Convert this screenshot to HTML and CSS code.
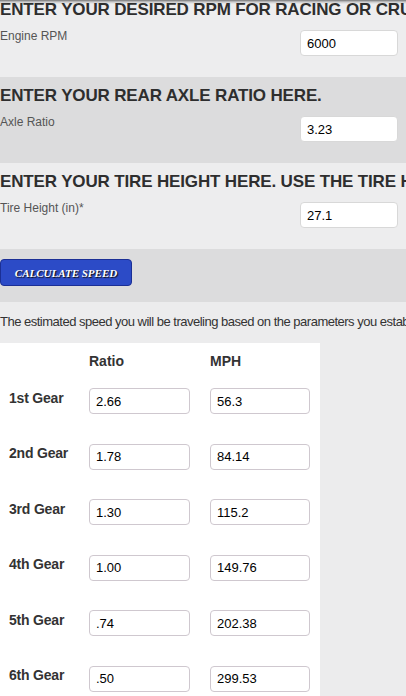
FILE: index.html
```html
<!DOCTYPE html>
<html lang="en">
<head>
<meta charset="utf-8">
<title>Speed Calculator</title>
<link rel="stylesheet" href="styles.css">
</head>
<body>
<div class="page">
  <section class="block block-light block-first">
    <h2 class="block-title">ENTER YOUR DESIRED RPM FOR RACING OR CRUISING.</h2>
    <div class="field-row">
      <label class="field-label">Engine RPM</label>
      <input class="field-input" type="text" value="6000">
    </div>
  </section>
  <section class="block block-dark">
    <h2 class="block-title">ENTER YOUR REAR AXLE RATIO HERE.</h2>
    <div class="field-row">
      <label class="field-label">Axle Ratio</label>
      <input class="field-input" type="text" value="3.23">
    </div>
  </section>
  <section class="block block-light">
    <h2 class="block-title">ENTER YOUR TIRE HEIGHT HERE. USE THE TIRE HEIGHT CALCULATOR IF NEEDED.</h2>
    <div class="field-row">
      <label class="field-label">Tire Height (in)*</label>
      <input class="field-input" type="text" value="27.1">
    </div>
  </section>
  <section class="button-bar">
    <button class="calc-btn" type="button">CALCULATE SPEED</button>
  </section>
  <p class="result-note">The estimated speed you will be traveling based on the parameters you established above.</p>
  <div class="gear-table">
    <div class="gear-head">
      <span></span>
      <span class="col-title">Ratio</span>
      <span class="col-title">MPH</span>
    </div>
    <div class="gear-body">
      <span class="gear-name">1st Gear</span>
      <input class="gear-input" type="text" value="2.66">
      <input class="gear-input" type="text" value="56.3">
      <span class="gear-name">2nd Gear</span>
      <input class="gear-input" type="text" value="1.78">
      <input class="gear-input" type="text" value="84.14">
      <span class="gear-name">3rd Gear</span>
      <input class="gear-input" type="text" value="1.30">
      <input class="gear-input" type="text" value="115.2">
      <span class="gear-name">4th Gear</span>
      <input class="gear-input" type="text" value="1.00">
      <input class="gear-input" type="text" value="149.76">
      <span class="gear-name">5th Gear</span>
      <input class="gear-input" type="text" value=".74">
      <input class="gear-input" type="text" value="202.38">
      <span class="gear-name">6th Gear</span>
      <input class="gear-input" type="text" value=".50">
      <input class="gear-input" type="text" value="299.53">
    </div>
  </div>
</div>
</body>
</html>
```

FILE: styles.css
```css
html, body {
  margin: 0;
  padding: 0;
  overflow: hidden;
}

body {
  background: #ececed;
  font-family: "Liberation Sans", Arial, sans-serif;
  color: #333;
}

.page {
  width: 406px;
}

.block {
  padding: 9px 8px 21px 0;
}

.block-light {
  background: #ededee;
}

.block-dark {
  background: #dcdcdd;
}

.block-first {
  padding-top: 0;
  background: linear-gradient(rgba(0, 0, 0, 0.5), rgba(0, 0, 0, 0.15) 2px, rgba(0, 0, 0, 0) 4px), #ededee;
}

.block-title {
  margin: 0 0 10px;
  font-size: 17px;
  line-height: 20px;
  font-weight: bold;
  color: #2e2e2e;
  white-space: nowrap;
  letter-spacing: -0.15px;
}

.field-row {
  display: flex;
  justify-content: space-between;
  align-items: flex-start;
}

.field-label {
  font-size: 12px;
  line-height: 14px;
  color: #555;
  margin-top: -1px;
}

.field-input {
  box-sizing: border-box;
  width: 98px;
  height: 26px;
  margin: 0;
  padding: 0 6px;
  border: 1px solid #d8d8d8;
  border-radius: 4px;
  background: #fff;
  font-family: "Liberation Sans", Arial, sans-serif;
  font-size: 13px;
  color: #000;
}

.button-bar {
  background: #dcdcdd;
  padding: 10px 0 16px;
}

.calc-btn {
  display: block;
  box-sizing: border-box;
  width: 132px;
  height: 27px;
  margin: 0;
  padding: 0;
  border: 1px solid #1b2f95;
  border-radius: 4px;
  background: #2c4bc7;
  color: #fff;
  font-family: "Liberation Serif", "Times New Roman", serif;
  font-style: italic;
  font-weight: bold;
  font-size: 11px;
  text-shadow: 1px 1px 1px #111;
}

.result-note {
  margin: 12px 0 14px;
  font-size: 13px;
  line-height: 15px;
  color: #333;
  white-space: nowrap;
  letter-spacing: -0.5px;
}

.gear-table {
  width: 320px;
  background: #fff;
  padding: 10px 0 40px 9px;
  box-sizing: border-box;
}

.gear-head,
.gear-body {
  display: grid;
  grid-template-columns: 60px 101px 100px;
  column-gap: 20px;
}

.gear-head {
  margin-bottom: 19px;
}

.col-title {
  font-size: 14px;
  line-height: 16px;
  font-weight: bold;
  color: #333;
}

.gear-body {
  row-gap: 29.5px;
  align-items: start;
}

.gear-name {
  font-size: 14px;
  line-height: 16px;
  font-weight: bold;
  color: #333;
  white-space: nowrap;
  padding-top: 1.5px;
  letter-spacing: -0.2px;
}

.gear-input {
  box-sizing: border-box;
  width: 100%;
  height: 26px;
  margin: 0;
  padding: 0 6px;
  border: 1px solid #cfc8cf;
  border-radius: 4px;
  background: #fff;
  font-family: "Liberation Sans", Arial, sans-serif;
  font-size: 13px;
  color: #000;
}
```
